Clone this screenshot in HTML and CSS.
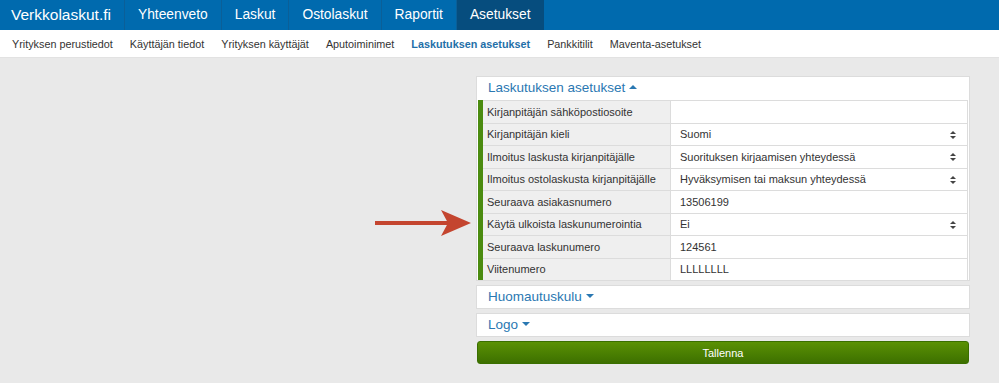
FILE: index.html
```html
<!DOCTYPE html>
<html lang="fi">
<head>
<meta charset="UTF-8">
<title>Verkkolaskut.fi – Laskutuksen asetukset</title>
<link rel="stylesheet" href="styles.css">
</head>
<body>

<nav class="topnav">
  <a class="brand" href="#">Verkkolaskut.fi</a>
  <a href="#">Yhteenveto</a>
  <a href="#">Laskut</a>
  <a href="#">Ostolaskut</a>
  <a href="#">Raportit</a>
  <a class="active" href="#">Asetukset</a>
</nav>

<nav class="subnav">
  <a href="#">Yrityksen perustiedot</a>
  <a href="#">Käyttäjän tiedot</a>
  <a href="#">Yrityksen käyttäjät</a>
  <a href="#">Aputoiminimet</a>
  <a class="active" href="#">Laskutuksen asetukset</a>
  <a href="#">Pankkitilit</a>
  <a href="#">Maventa-asetukset</a>
</nav>

<main class="page">
  <div class="arrow">
    <svg width="96" height="26" viewBox="0 0 96 26">
      <path d="M0 11 H78 V15 H0 Z" fill="#c4452f"/>
      <path d="M66 0 L96 13 L66 26 L73 13 Z" fill="#c4452f"/>
    </svg>
  </div>

  <div class="settings">
    <section class="panel">
      <h2 class="panel-title">Laskutuksen asetukset <span class="caret up"></span></h2>
      <table class="fields">
        <tr><th>Kirjanpitäjän sähköpostiosoite</th><td></td></tr>
        <tr><th>Kirjanpitäjän kieli</th><td>Suomi<span class="updown"></span></td></tr>
        <tr><th>Ilmoitus laskusta kirjanpitäjälle</th><td>Suorituksen kirjaamisen yhteydessä<span class="updown"></span></td></tr>
        <tr><th>Ilmoitus ostolaskusta kirjanpitäjälle</th><td>Hyväksymisen tai maksun yhteydessä<span class="updown"></span></td></tr>
        <tr><th>Seuraava asiakasnumero</th><td>13506199</td></tr>
        <tr><th>Käytä ulkoista laskunumerointia</th><td>Ei<span class="updown"></span></td></tr>
        <tr><th>Seuraava laskunumero</th><td>124561</td></tr>
        <tr><th>Viitenumero</th><td>LLLLLLLL</td></tr>
      </table>
    </section>

    <section class="panel">
      <h2 class="panel-title">Huomautuskulu <span class="caret"></span></h2>
    </section>

    <section class="panel">
      <h2 class="panel-title">Logo <span class="caret"></span></h2>
    </section>

    <button class="save">Tallenna</button>
  </div>
</main>

</body>
</html>
```

FILE: styles.css
```css
body { margin: 0; font-family: "Liberation Sans", Arial, sans-serif; background: #e9e9e9; color: #333; }
a { text-decoration: none; }

.topnav { display: flex; height: 30px; background: #006aae; }
.topnav a { color: white; font-size: 13.8px; line-height: 30px; padding: 0 13px; border-left: 1px solid #0b5f98; }
.topnav a.brand { font-size: 15.5px; padding: 0 13px 0 11px; border-left: none; }
.topnav a.active { background: #064d7e; }

.subnav { display: flex; height: 27px; background: white; border-bottom: 1px solid #e2e2e2; }
.subnav a { color: #333; font-size: 10.8px; line-height: 28px; padding: 0 8.5px; white-space: nowrap; }
.subnav a:first-child { padding-left: 12px; }
.subnav a.active { color: #1f6fa8; font-weight: bold; }

.page { display: flex; padding-top: 18px; }
.arrow { width: 96px; margin-left: 375px; padding-top: 134px; }
.settings { width: 494px; margin-left: 5px; }

.panel { background: white; border: 1px solid #dcdcdc; margin-bottom: 4px; }
.panel-title { margin: 0; font-weight: normal; font-size: 13.5px; color: #2a78b2; line-height: 22px; padding-left: 11px; }

.caret { display: inline-block; width: 0; height: 0; border-left: 4px solid transparent; border-right: 4px solid transparent; border-top: 4px solid #2a78b2; vertical-align: 3px; }
.caret.up { border-top: none; border-bottom: 4px solid #2a78b2; }

.fields { width: 490px; margin: 1px 1px 0; table-layout: fixed; border-collapse: collapse; font-size: 11px; }
.fields th, .fields td { height: 21.5px; padding: 0 0 0 4px; border: 1px solid #dcdcdc; border-right: none; text-align: left; font-weight: normal; white-space: nowrap; color: #333; }
.fields th { width: 183px; background: #efefef; border-left: 5px solid #4b8b10; }
.fields td { padding-left: 9px; position: relative; border-right: 1px solid #dcdcdc; }
.fields tr:last-child th, .fields tr:last-child td { border-bottom: none; }

.updown { position: absolute; right: 11px; top: 7px; width: 6px; height: 9px; }
.updown::before, .updown::after { content: ""; position: absolute; left: 0; border-left: 3px solid transparent; border-right: 3px solid transparent; }
.updown::before { top: 0; border-bottom: 3px solid #444; }
.updown::after { top: 5px; border-top: 3px solid #444; }

.save { display: block; width: 492px; height: 23px; margin-left: 1px; border: 1px solid #3a6f00; border-radius: 3px; background: linear-gradient(#5a9104, #3d7000); color: white; font-family: "Liberation Sans", Arial, sans-serif; font-size: 11px; cursor: pointer; }
```
